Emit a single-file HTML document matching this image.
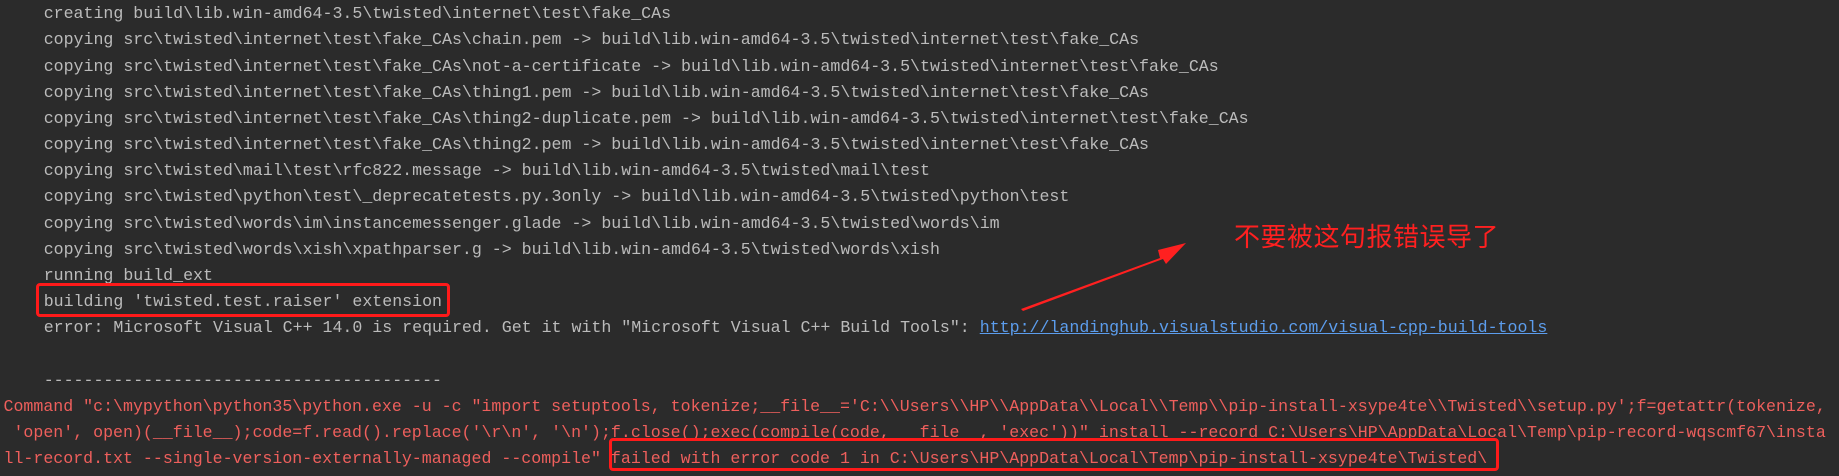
<!DOCTYPE html>
<html><head><meta charset="utf-8"><style>
html,body{margin:0;padding:0;background:#2b2b2b;width:1839px;height:476px;overflow:hidden;position:relative}
.l{position:absolute;white-space:pre;font-family:"Liberation Mono",monospace;font-size:16.6px;line-height:20px;color:#bbbbbb;height:20px}
.g{left:43.7px}
.r{left:3.5px;color:#ee5f5c}
a{color:#5c9ded;text-decoration:underline}
.box{position:absolute;border:3px solid #ff1a1a;border-radius:4px;box-sizing:border-box}
.cn{position:absolute;left:1234px;top:220px;font-family:"Noto Sans CJK SC",sans-serif;font-size:26px;line-height:32px;color:#ff2020;white-space:nowrap;letter-spacing:0.5px}
</style></head><body>
<div class="l g" style="top:4px">creating build\lib.win-amd64-3.5\twisted\internet\test\fake_CAs</div>
<div class="l g" style="top:30px">copying src\twisted\internet\test\fake_CAs\chain.pem -&gt; build\lib.win-amd64-3.5\twisted\internet\test\fake_CAs</div>
<div class="l g" style="top:56.5px">copying src\twisted\internet\test\fake_CAs\not-a-certificate -&gt; build\lib.win-amd64-3.5\twisted\internet\test\fake_CAs</div>
<div class="l g" style="top:82.7px">copying src\twisted\internet\test\fake_CAs\thing1.pem -&gt; build\lib.win-amd64-3.5\twisted\internet\test\fake_CAs</div>
<div class="l g" style="top:109px">copying src\twisted\internet\test\fake_CAs\thing2-duplicate.pem -&gt; build\lib.win-amd64-3.5\twisted\internet\test\fake_CAs</div>
<div class="l g" style="top:135px">copying src\twisted\internet\test\fake_CAs\thing2.pem -&gt; build\lib.win-amd64-3.5\twisted\internet\test\fake_CAs</div>
<div class="l g" style="top:161.2px">copying src\twisted\mail\test\rfc822.message -&gt; build\lib.win-amd64-3.5\twisted\mail\test</div>
<div class="l g" style="top:187.4px">copying src\twisted\python\test\_deprecatetests.py.3only -&gt; build\lib.win-amd64-3.5\twisted\python\test</div>
<div class="l g" style="top:213.6px">copying src\twisted\words\im\instancemessenger.glade -&gt; build\lib.win-amd64-3.5\twisted\words\im</div>
<div class="l g" style="top:239.8px">copying src\twisted\words\xish\xpathparser.g -&gt; build\lib.win-amd64-3.5\twisted\words\xish</div>
<div class="l g" style="top:266px">running build_ext</div>
<div class="l g" style="top:292.2px">building 'twisted.test.raiser' extension</div>
<div class="l g" style="top:318.4px">error: Microsoft Visual C++ 14.0 is required. Get it with "Microsoft Visual C++ Build Tools": <a>http://landinghub.visualstudio.com/visual-cpp-build-tools</a></div>
<div class="l g" style="top:370.8px">----------------------------------------</div>
<div class="l r" style="top:397px">Command "c:\mypython\python35\python.exe -u -c "import setuptools, tokenize;__file__='C:\\Users\\HP\\AppData\\Local\\Temp\\pip-install-xsype4te\\Twisted\\setup.py';f=getattr(tokenize,</div>
<div class="l r" style="top:423.2px"> 'open', open)(__file__);code=f.read().replace('\r\n', '\n');f.close();exec(compile(code, __file__, 'exec'))" install --record C:\Users\HP\AppData\Local\Temp\pip-record-wqscmf67\insta</div>
<div class="l r" style="top:449.4px">ll-record.txt --single-version-externally-managed --compile" failed with error code 1 in C:\Users\HP\AppData\Local\Temp\pip-install-xsype4te\Twisted\</div>
<div class="box" style="left:36px;top:283px;width:414px;height:34px"></div>
<div class="box" style="left:609px;top:438px;width:890px;height:33px"></div>
<svg style="position:absolute;left:0;top:0" width="1839" height="476">
<polygon points="1021,309 1160,258 1158,250 1186,243 1166,264 1163,259 1023,311" fill="#ff2020"/>
</svg>
<div class="cn">不要被这句报错误导了</div>
</body></html>
